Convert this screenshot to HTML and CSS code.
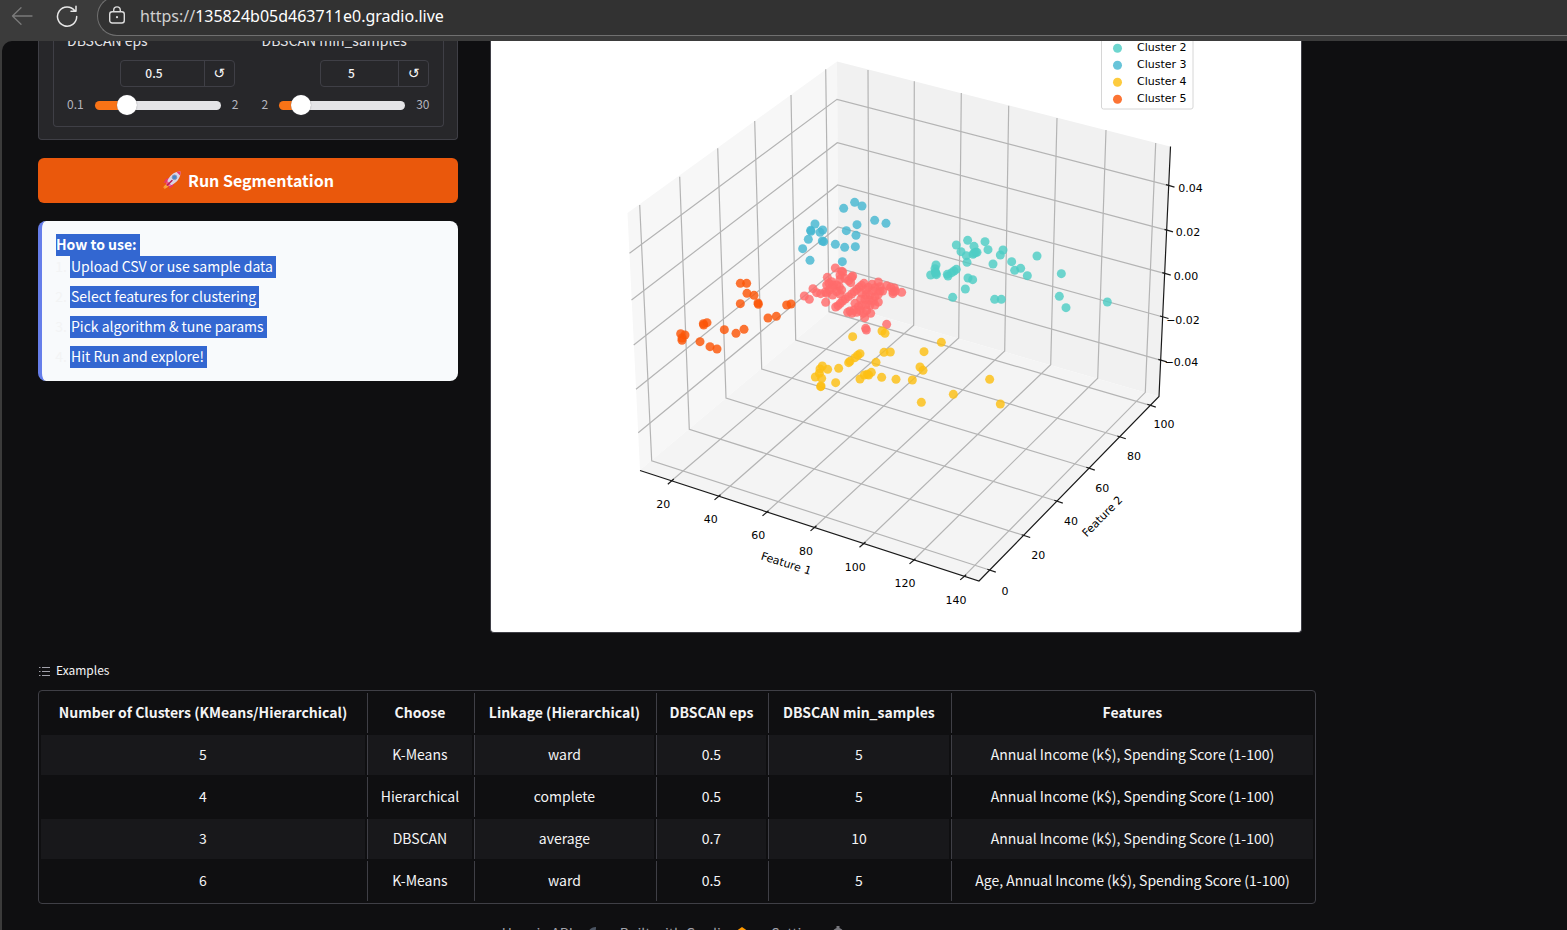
FILE: index.html
```html
<!DOCTYPE html>
<html lang="en">
<head>
<meta charset="utf-8">
<title>Customer Segmentation</title>
<link rel="stylesheet" href="styles.css">
</head>
<body>
<header class="toolbar">
  <button class="tool" type="button" aria-label="Back" disabled>
    <svg width="22" height="22" viewBox="0 0 22 22" fill="none" stroke="#7b7b7b" stroke-width="1.3" stroke-linecap="round" stroke-linejoin="round"><path d="M21 11H1.5M10 2.7 1.5 11l8.500 8.300"/></svg>
  </button>
  <button class="tool" type="button" aria-label="Reload">
    <svg width="22" height="22" viewBox="0 0 22 22" fill="none" stroke="#e8e8e8" stroke-width="1.5" stroke-linecap="round" stroke-linejoin="round"><path d="M20.700 11.500A9.600 9.600 0 1 1 18.800 5.800M20 1.300V6.300H15"/></svg>
  </button>
  <div class="address">
    <svg width="18" height="20" viewBox="0 0 18 20" fill="none" stroke="#dcdcdc" stroke-width="1.4"><rect x="1.700" y="5.700" width="14.600" height="11.300" rx="2.500"/><path d="M5.700 5.500V4.200a3.300 3.300 0 0 1 6.600 0v1.300" /><circle cx="9" cy="11.200" r="1.100" fill="#dcdcdc" stroke="none"/></svg>
    <span class="url"><span class="scheme">https://</span>135824b05d463711e0.gradio.live</span>
  </div>
</header>
<main class="page">
  <div class="content">
    <div class="columns">
      <div class="controls">
        <section class="card">
          <div class="params">
            <div class="param">
              <label for="eps">DBSCAN eps</label>
              <div class="number number-wide">
                <input id="eps" type="text" inputmode="decimal" value="0.5">
                <button type="button" aria-label="Reset eps">↺</button>
              </div>
              <div class="slider">
                <span>0.1</span>
                <input type="range" min="0.1" max="2" step="0.1" value="0.5" aria-label="DBSCAN eps slider" style="--fill:24%">
                <span>2</span>
              </div>
            </div>
            <div class="param">
              <label for="min-samples">DBSCAN min_samples</label>
              <div class="number">
                <input id="min-samples" type="text" inputmode="numeric" value="5">
                <button type="button" aria-label="Reset min_samples">↺</button>
              </div>
              <div class="slider">
                <span>2</span>
                <input type="range" min="2" max="30" value="5" aria-label="DBSCAN min_samples slider" style="--fill:12%">
                <span>30</span>
              </div>
            </div>
          </div>
        </section>
        <button class="run" type="button">
          <svg width="20" height="20" viewBox="0 0 20 20"><path d="M3.500 14.500 1 17.500l1.500.3-.3 1.500 4.500-2.800z" fill="#f9a23b"/><path d="M8 7.500 4 9l-2.500 4 4-.8zM12 11.500 11 16l-4 2.500.8-4.500z" fill="#e8376f"/><path d="M18.500 1.500c-5-.3-9.500 2.500-12.500 8L4.500 13.500 7 16l4-1.800c5.200-3 7.800-7.700 7.500-12.700z" fill="#d9d5e6"/><path d="M14.500 1.900c1.400-.4 2.700-.5 4-.4.1 1.300 0 2.600-.4 3.900z" fill="#e8376f"/><path d="m5.500 11-1.700 3.300 2 1.900 3-1.400z" fill="#f0538a"/><circle cx="12.500" cy="7.300" r="2.300" fill="#4b87c8" stroke="#8793b5"/><path d="m5.500 15 4.500-4.500" stroke="#b61f55" stroke-width="1.500" stroke-linecap="round"/></svg>
          <span>Run Segmentation</span>
        </button>
        <section class="howto">
          <strong><mark>How to use:&nbsp;</mark></strong>
          <ol>
            <li><mark>Upload CSV or use sample data</mark></li>
            <li><mark>Select features for clustering</mark></li>
            <li><mark>Pick algorithm &amp; tune params</mark></li>
            <li><mark>Hit Run and explore!</mark></li>
          </ol>
        </section>
      </div>
      <div class="result">
        <svg class="plot" viewBox="491 31 810 601" role="img" aria-label="3D scatter plot of clusters">
          <g class="panes">
            <path d="M627.500 213 837 61.500 838.500 304 640 470z" fill="#f7f7f7"/>
            <path d="M837 61.500 1170 146.500 1159 396.500 838.500 304z" fill="#f1f1f1"/>
            <path d="M838.500 304 1159 396.500 979 581 640 470z" fill="#f4f4f4"/>
          </g>
          <g id="grid" class="grid"></g>
          <path class="axis" d="M640 470.500 979 581 1159 396.500 1170.500 146.500"/>
          <g id="ticks" class="axis"></g>
          <g id="points"></g>
          <g id="labels" class="plot-text"></g>
          <g class="plot-text">
            <text text-anchor="middle" transform="translate(785 567) rotate(17.500)">Feature 1</text>
            <text text-anchor="middle" transform="translate(1105 519) rotate(-45.500)">Feature 2</text>
          </g>
          <rect x="1101.500" y="10" width="91.500" height="99" rx="2" fill="#fff" stroke="#d6d6d6"/>
          <g id="legend" class="plot-text"></g>
        </svg>
      </div>
    </div>
    <section class="examples">
      <h2>
        <svg width="12" height="12" viewBox="0 0 12 12" stroke="#a1a1aa"><path d="M4 2.500h8M4 6.500h8M4 10.500h8"/><path d="M1 2.500h1.500M1 6.500h1.500M1 10.500h1.500"/></svg>
        <span>Examples</span>
      </h2>
      <div class="table-wrap">
        <table>
          <colgroup><col class="c-clusters"><col class="c-choose"><col class="c-linkage"><col class="c-eps"><col class="c-min"><col></colgroup>
          <thead><tr><th>Number of Clusters (KMeans/Hierarchical)</th><th>Choose</th><th>Linkage (Hierarchical)</th><th>DBSCAN eps</th><th>DBSCAN min_samples</th><th>Features</th></tr></thead>
          <tbody>
            <tr><td>5</td><td>K-Means</td><td>ward</td><td>0.5</td><td>5</td><td>Annual Income (k$), Spending Score (1-100)</td></tr>
            <tr><td>4</td><td>Hierarchical</td><td>complete</td><td>0.5</td><td>5</td><td>Annual Income (k$), Spending Score (1-100)</td></tr>
            <tr><td>3</td><td>DBSCAN</td><td>average</td><td>0.7</td><td>10</td><td>Annual Income (k$), Spending Score (1-100)</td></tr>
            <tr><td>6</td><td>K-Means</td><td>ward</td><td>0.5</td><td>5</td><td>Age, Annual Income (k$), Spending Score (1-100)</td></tr>
          </tbody>
        </table>
      </div>
    </section>
    <footer class="footer">
      <a href="#api">Use via API <svg width="15" height="14" viewBox="0 0 15 14"><path d="M15 1c-4 0-7 2-8 6l3 3c4-1 5-5 5-9z" fill="#4b5563"/></svg></a>
      <a href="#gradio">Built with Gradio <svg width="10" height="14" viewBox="0 0 10 14"><path d="M5 1l5 3.500v5L5 13 0 9.500v-5z" fill="#f90"/></svg></a>
      <a href="#settings">Settings <svg width="12" height="14" viewBox="0 0 12 14"><path d="M4.500 0h3v2.500h-3zM4.500 11.500h3V14h-3zM0 5.500h2v3H0zM10 5.500h2v3h-2z" fill="#77777d"/><circle cx="6" cy="7" r="4" fill="none" stroke="#77777d" stroke-width="2.500"/></svg></a>
    </footer>
  </div>
</main>
<script src="chart.js"></script>
</body>
</html>
```
FILE: styles.css
```css
* { box-sizing: border-box; }

body {
  margin: 0;
  height: 100vh;
  overflow: hidden;
  display: flex;
  flex-direction: column;
  background: #3b3b3b;
  color: #f4f4f5;
  font-family: "Noto Sans CJK SC", "Noto Sans", sans-serif;
  font-size: 14px;
  line-height: 20px;
}

button, input { font: inherit; color: inherit; }

/* Browser toolbar */
.toolbar {
  flex: none;
  display: flex;
  align-items: flex-start;
  height: 41px;
  padding-left: 11px;
  overflow: hidden;
}
.tool {
  width: 22px;
  height: 32px;
  margin-right: 23px;
  padding: 0;
  border: 0;
  background: none;
  display: flex;
  align-items: center;
}
.tool + .address { margin-left: -4px; }
.address {
  flex: 1;
  display: flex;
  align-items: center;
  gap: 14px;
  height: 40px;
  margin-top: -4px;
  padding-left: 10px;
  border: 1px solid #707070;
  border-right: 0;
  border-radius: 20px 0 0 20px;
  background: #323232;
}
.url {
  font-family: "Noto Sans", "Open Sans", sans-serif;
  font-size: 16px;
  color: #fff;
}
.scheme { color: #d0d0d0; }

/* App page */
.page {
  flex: 1;
  min-height: 0;
  overflow: hidden;
  margin-left: 2px;
  padding: 0 36px;
  border-top-left-radius: 10px;
  background: #0f0f11;
}
.content {
  max-width: 1278px;
  margin-top: -10px;
}
.columns {
  display: grid;
  grid-template-columns: 1fr 2fr;
  gap: 18px;
}
.controls {
  display: flex;
  flex-direction: column;
  gap: 18px;
}
.card {
  padding: 0 13px 12px 14px;
  border: 1px solid #3f3f46;
  border-top: 0;
  border-radius: 0 0 4px 4px;
  background: #27272a;
}
.params {
  display: grid;
  grid-template-columns: 1fr 1fr;
  gap: 26px;
  padding: 0 13px 11px;
  border: 1px solid #3f3f46;
  border-top: 0;
  border-radius: 0 0 4px 4px;
}
.param {
  display: flex;
  flex-direction: column;
  min-width: 0;
}
.param label {
  line-height: 18px;
  white-space: nowrap;
  color: #e4e4e7;
}
.number {
  display: flex;
  align-self: flex-end;
  width: 109px;
  height: 27px;
  margin: 11px 1px 8px 0;
  border: 1px solid #3f3f46;
  border-radius: 4px;
}
.number-wide { width: 115px; }
.number input {
  flex: 1;
  min-width: 0;
  padding: 0 16px 2px 0;
  border: 0;
  background: none;
  font-size: 12px;
  font-weight: 500;
  text-align: center;
}
.number button {
  width: 30px;
  padding: 0 0 2px;
  border: 0;
  border-left: 1px solid #3f3f46;
  background: none;
  font-family: "DejaVu Sans", sans-serif;
  font-size: 14px;
}
.slider {
  display: flex;
  align-items: center;
  gap: 11px;
  height: 20px;
  font-size: 12px;
  color: #b4b4be;
}
.slider span { padding-bottom: 2px; }
.slider input {
  flex: none;
  width: 126px;
  height: 20px;
  margin: 0;
  background: none;
  appearance: none;
}
.slider input::-webkit-slider-runnable-track {
  height: 9px;
  border-radius: 5px;
  background: linear-gradient(to right, #f97316 var(--fill), #e4e4e7 var(--fill));
}
.slider input::-webkit-slider-thumb {
  appearance: none;
  width: 20px;
  height: 20px;
  margin-top: -6px;
  border: 0;
  border-radius: 50%;
  background: #fff;
  box-shadow: 0 0 1px #71717a;
}
.run {
  display: flex;
  align-items: center;
  justify-content: center;
  gap: 6px;
  height: 45px;
  padding: 0 0 2px;
  border: 0;
  border-radius: 6px;
  background: #ea580c;
  color: #fff;
  font-size: 16px;
  font-weight: 700;
}
.howto {
  padding: 13px 14px;
  border-left: 4px solid #667eea;
  border-radius: 8px;
  background: #f8fafc;
  color: #f3f4f5;
}
.howto strong { display: block; height: 22px; }
.howto mark {
  display: inline-block;
  height: 22px;
  background: #3367d1;
  color: #fff;
}
.howto ol {
  display: grid;
  gap: 8px;
  margin: 0;
  padding-left: 14px;
}
.howto li { height: 22px; }
.howto li mark { padding: 0 3px 0 1px; }
.result { padding: 0 14px; }
.plot {
  display: block;
  width: 100%;
  border: 1px solid #3f3f46;
  border-top: 0;
  border-radius: 0 0 4px 4px;
  background: #fff;
}
.grid { stroke: #b4b4b4; stroke-width: 1.2; fill: none; }
.axis { stroke: #1a1a1a; stroke-width: 1.2; fill: none; }
.plot-text {
  font-family: "DejaVu Sans", sans-serif;
  font-size: 11px;
  fill: #000;
}

/* Examples */
.examples { margin-top: 27px; }
.examples h2 {
  display: flex;
  align-items: center;
  gap: 6px;
  margin: 0 0 9px;
  font-size: 12px;
  font-weight: 400;
}
.examples h2 span { padding-bottom: 1px; }
.table-wrap {
  border: 1px solid #3f3f46;
  border-radius: 4px;
}
table {
  width: 100%;
  table-layout: fixed;
  border-spacing: 2px;
}
.c-clusters { width: 25.67%; }
.c-choose { width: 8.32%; }
.c-linkage { width: 14.26%; }
.c-eps { width: 8.72%; }
.c-min { width: 14.34%; }
th, td {
  height: 40px;
  padding: 0 0 2px;
  text-align: center;
  white-space: nowrap;
}
th + th, td + td { border-left: 1px solid #3f3f46; }
tbody tr:nth-child(odd) td { background: #18181b; }

.footer {
  display: flex;
  justify-content: center;
  gap: 24px;
  margin-top: 19px;
  padding-right: 8px;
}
.footer a {
  display: flex;
  align-items: center;
  gap: 8px;
  color: #a1a1aa;
  text-decoration: none;
}
```
FILE: chart.js
```js
const NS = "http://www.w3.org/2000/svg";

function add(parentId, tag, attrs, text) {
  const el = document.createElementNS(NS, tag);
  for (const [key, value] of Object.entries(attrs)) el.setAttribute(key, value);
  if (text) el.textContent = text;
  document.getElementById(parentId).append(el);
}

// Each grid line runs across two panes: start, bend, end.
const grid = [
  [639.7,205, 651.7,460.7, 990.3,570.3], [679.7,176.7, 689.3,429.3, 1024.7,535.7],
  [717.7,148.3, 726,398, 1057.3,501.3], [754.7,121, 761.7,369, 1089.3,468.3],
  [791,95, 795.7,340, 1120.3,437], [825.7,69.3, 829,311.7, 1150.3,405.3],
  [868,70, 869,312.5, 671.3,481], [914.3,81.3, 913.7,325.3, 718,496.7],
  [961.3,93, 958.7,338, 766,512.7], [1008.7,105.7, 1004.7,351, 814,527.7],
  [1057,118, 1050.7,364.7, 863,544], [1106,130, 1097.7,378.3, 913,560.7],
  [1155.7,143, 1145.3,392.3, 963.7,576.7],
  [629.5,253.3, 837,99.3, 1169,185.7], [631.5,300, 837.3,142.7, 1167.5,230.3],
  [633.7,345, 837.6,185, 1165.3,273.7], [636,389.3, 837.9,227, 1163,317],
  [638.2,432.7, 838.2,268, 1161.3,360.3]
];
grid.forEach(line => add("grid", "polyline", { points: line.join(" ") }));

const xTicks = grid.slice(6, 13).map(l => [l[4], l[5], -3.5, 3.2, 2.5, -2]);
const yTicks = grid.slice(0, 6).map(l => [l[4], l[5], -3, -1, 5.5, 1.8]);
const zTicks = grid.slice(13).map(l => [l[4], l[5], -3, -1, 5.5, 1.5]);
[...xTicks, ...yTicks, ...zTicks].forEach(([x, y, a, b, c, d]) =>
  add("ticks", "line", { x1: x + a, y1: y + b, x2: x + c, y2: y + d }));

const labels = [
  ["20",663.3,507.5], ["40",710.7,523], ["60",758.3,538.5], ["80",806,554.5], ["100",855.3,570.5], ["120",905,587], ["140",956,604],
  ["0",1005,594.5], ["20",1038.3,558.500], ["40",1071,524.5], ["60",1102.3,491.5], ["80",1134,459.5], ["100",1164,428],
  ["0.04",1190.5,191.5], ["0.02",1188,235.5], ["0.00",1186,280], ["\u22120.02",1183,323.5], ["\u22120.04",1181.500,365.5]
];
labels.forEach(([text, x, y]) => add("labels", "text", { x, y, "text-anchor": "middle" }, text));

// Points are in thirds of a unit from the cluster's origin.
const clusters = [
  { color: "#ff6b6b", origin: [660, 190], points: "526,234 545,244 502,262 578,258 575,262 540,255 548,246 515,275 507,280 500,285 540,268 555,265 566,272 572,278 459,296 433,318 448,328 470,308 482,311 497,337 500,310 508,300 520,293 530,285 538,290 545,300 530,305 518,315 540,312 496,306 612,280 605,286 598,292 590,298 583,305 575,312 565,320 556,327 548,333 541,340 534,347 527,351 636,283 655,276 680,287 660,290 645,293 625,292 618,300 640,303 660,303 668,303 655,313 645,320 630,315 618,315 605,310 602,328 615,328 628,330 640,333 655,336 645,345 630,345 618,345 605,345 595,350 585,340 582,360 570,363 563,367 576,370 590,367 600,362 610,370 620,362 632,370 614,383 703,294 699,305 699,311 725,307 706,303 680,403 617,415 619,420 692,292 520,285" },
  { color: "#4ecdc4", origin: [900, 220], points: "203,61 255,65 169,75 222,79 183,95 264,89 309,90 301,105 199,107 219,103 227,97 231,97 222,100 201,127 279,132 335,125 362,145 344,151 382,167 411,108 484,161 478,229 498,263 622,246 108,135 105,146 106,156 92,165 109,164 108,160 142,163 144,168 155,158 169,148 162,153 204,174 218,179 196,207 158,232 284,238 304,238" },
  { color: "#45b7d1", origin: [660, 190], points: "584,37 606,48 551,55 644,91 678,100 591,104 559,122 588,136 465,102 452,121 453,124 488,120 480,127 445,148 487,153 491,155 428,176 526,163 554,172 586,170 450,211 547,215" },
  { color: "#fdbf14", origin: [660, 190], points: "578,440 666,423 675,430 600,491 593,496 585,503 570,514 566,518 672,487 691,486 648,517 536,535 487,528 480,537 503,538 478,550 466,561 485,565 482,590 483,588 527,578 600,567 613,555 622,553 634,547 626,555 665,562 708,568 757,570 844,457 792,485 780,531 789,541 880,613 784,637 989,568 1021,642" },
  { color: "#fb5607", origin: [660, 190], points: "241,280 260,280 261,310 282,316 241,341 294,339 295,343 380,345 393,342 324,384 349,379 130,401 141,398 131,405 193,419 228,430 252,418 62,431 75,435 66,444 66,451 120,455 150,470 171,477" }
];
clusters.forEach(({ color, origin, points }) => points.split(" ").forEach(pair => {
  const [x, y] = pair.split(",").map(Number);
  add("points", "circle", { cx: origin[0] + x / 3, cy: origin[1] + y / 3, r: 4.5, fill: color, "fill-opacity": 0.82 });
}));

clusters.slice(1).forEach(({ color }, i) => {
  const y = 51 + i * 17;
  add("legend", "circle", { cx: 1117.5, cy: y - 2.7, r: 4.5, fill: color, "fill-opacity": 0.82 });
  add("legend", "text", { x: 1137, y }, `Cluster ${i + 2}`);
});
```
